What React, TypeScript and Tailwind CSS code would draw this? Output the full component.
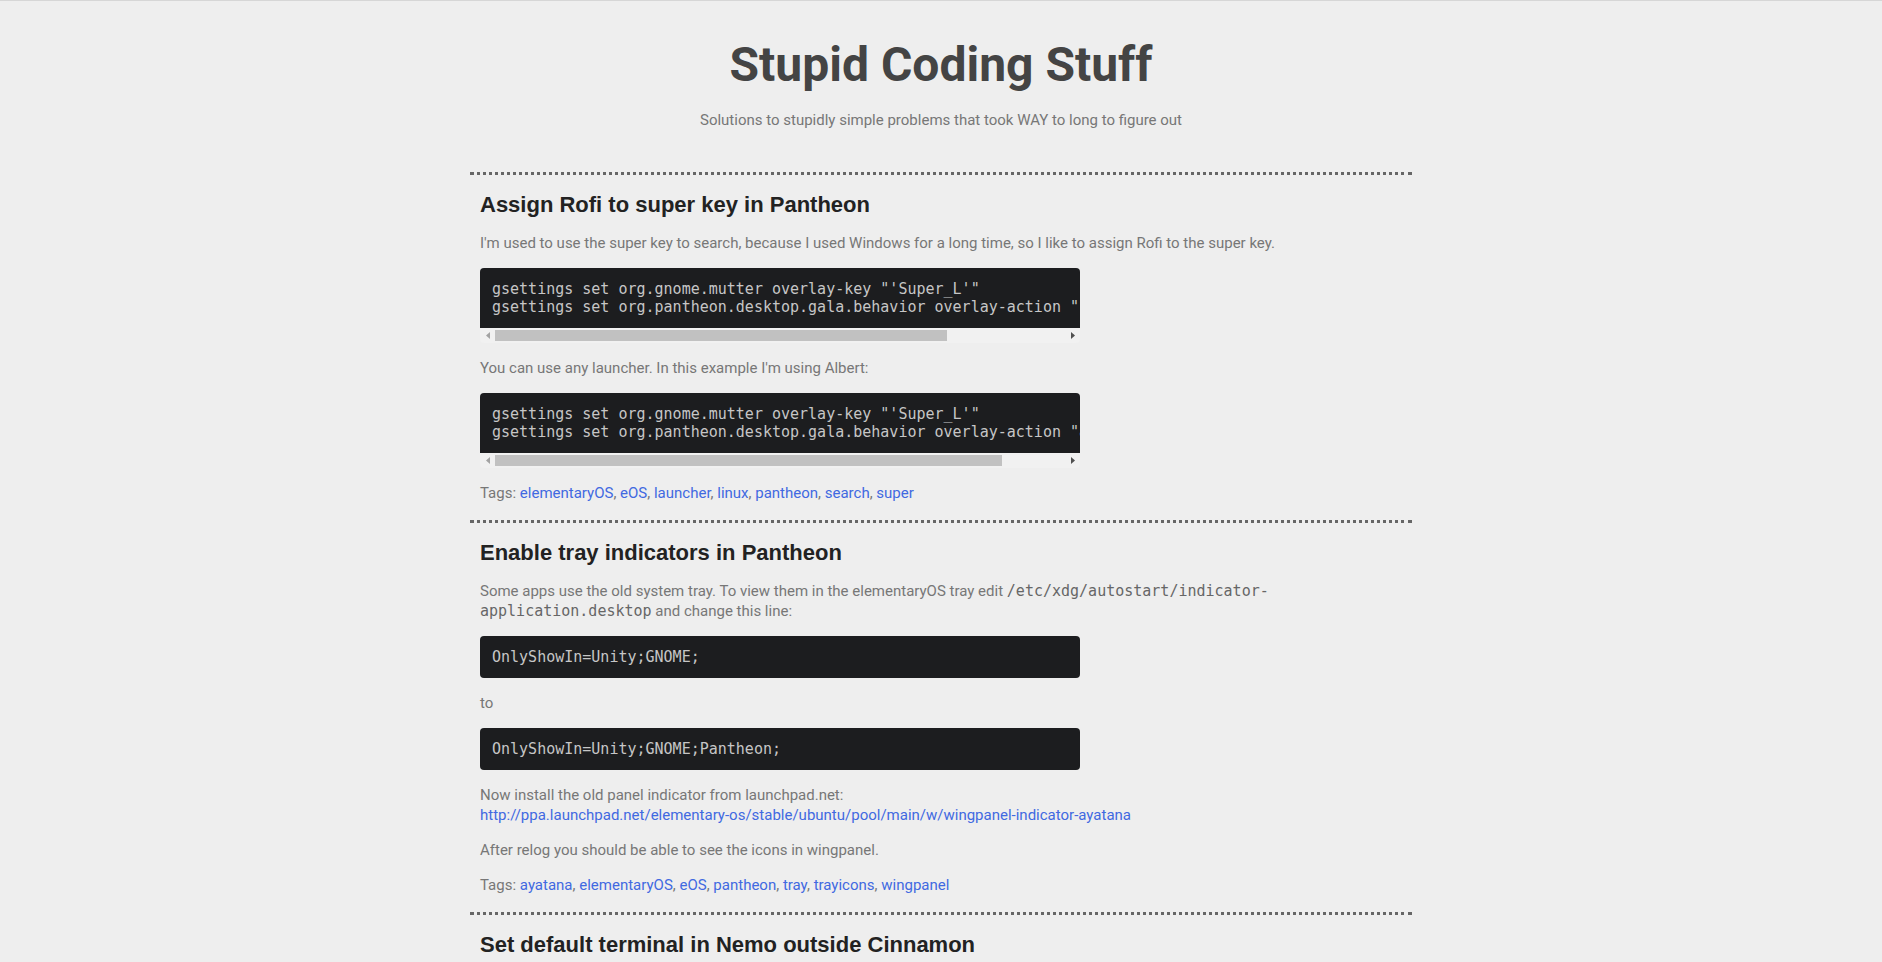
import React from 'react';

type Block =
  | { kind: 'p'; content: React.ReactNode }
  | { kind: 'code'; text: string; thumb?: string };

type Post = {
  title: string;
  blocks: Block[];
  tags: string[];
};

const mono = "font-['DejaVu_Sans_Mono','Liberation_Mono',monospace]";

const posts: Post[] = [
  {
    title: 'Assign Rofi to super key in Pantheon',
    blocks: [
      {
        kind: 'p',
        content:
          "I'm used to use the super key to search, because I used Windows for a long time, so I like to assign Rofi to the super key.",
      },
      {
        kind: 'code',
        text: `gsettings set org.gnome.mutter overlay-key "'Super_L'"\ngsettings set org.pantheon.desktop.gala.behavior overlay-action "rofi -show drun"`,
        thumb: 'w-[452px]',
      },
      { kind: 'p', content: "You can use any launcher. In this example I'm using Albert:" },
      {
        kind: 'code',
        text: `gsettings set org.gnome.mutter overlay-key "'Super_L'"\ngsettings set org.pantheon.desktop.gala.behavior overlay-action "albert show"`,
        thumb: 'w-[507px]',
      },
    ],
    tags: ['elementaryOS', 'eOS', 'launcher', 'linux', 'pantheon', 'search', 'super'],
  },
  {
    title: 'Enable tray indicators in Pantheon',
    blocks: [
      {
        kind: 'p',
        content: (
          <>
            Some apps use the old system tray. To view them in the elementaryOS tray edit{' '}
            <code className={`${mono} text-[#666]`}>/etc/xdg/autostart/indicator-application.desktop</code> and change
            this line:
          </>
        ),
      },
      { kind: 'code', text: 'OnlyShowIn=Unity;GNOME;' },
      { kind: 'p', content: 'to' },
      { kind: 'code', text: 'OnlyShowIn=Unity;GNOME;Pantheon;' },
      {
        kind: 'p',
        content: (
          <>
            Now install the old panel indicator from launchpad.net:
            <br />
            <a href="#" className="text-[#4169e1]">
              http://ppa.launchpad.net/elementary-os/stable/ubuntu/pool/main/w/wingpanel-indicator-ayatana
            </a>
          </>
        ),
      },
      { kind: 'p', content: 'After relog you should be able to see the icons in wingpanel.' },
    ],
    tags: ['ayatana', 'elementaryOS', 'eOS', 'pantheon', 'tray', 'trayicons', 'wingpanel'],
  },
  {
    title: 'Set default terminal in Nemo outside Cinnamon',
    blocks: [
      {
        kind: 'p',
        content:
          'Nemo reads the terminal from the Cinnamon settings, even when you run it in another desktop. Set it with:',
      },
      {
        kind: 'code',
        text: 'gsettings set org.cinnamon.desktop.default-applications.terminal exec io.elementary.terminal',
      },
    ],
    tags: ['cinnamon', 'linux', 'nemo', 'terminal'],
  },
];

// the classic horizontal scrollbar under a long code block
function HScroll({ thumb }: { thumb: string }) {
  return (
    <div className="flex h-[15px] items-center bg-[#f1f1f1]">
      <div className="flex h-[15px] w-[15px] items-center justify-center">
        <svg width="4" height="7" viewBox="0 0 4 7">
          <path d="M4 0 L0 3.5 L4 7 Z" fill="#a3a3a3" />
        </svg>
      </div>
      <div className="h-[15px] flex-1 py-[2px]">
        <div className={`h-full bg-[#c1c1c1] ${thumb}`} />
      </div>
      <div className="flex h-[15px] w-[15px] items-center justify-center">
        <svg width="4" height="7" viewBox="0 0 4 7">
          <path d="M0 0 L4 3.5 L0 7 Z" fill="#505050" />
        </svg>
      </div>
    </div>
  );
}

function Code({ text, thumb }: { text: string; thumb?: string }) {
  return (
    <div className="w-[600px] overflow-hidden rounded-[4px]">
      <pre
        className={`${mono} overflow-hidden bg-[#1c1d1f] p-3 text-[15px] leading-[18px] whitespace-pre text-[#c6c6c6]`}
      >
        {text}
      </pre>
      {thumb && <HScroll thumb={thumb} />}
    </div>
  );
}

function Article({ post }: { post: Post }) {
  return (
    <article className="border-t-[3px] border-dotted border-[#666] px-[10px] pt-[18px] pb-[17px]">
      <h2 className="font-['Liberation_Sans',Arial,sans-serif] text-[22px] leading-[24px] font-bold text-[#222]">
        {post.title}
      </h2>
      <div className="mt-[16px] flex flex-col gap-[15px]">
        {post.blocks.map((b, i) =>
          b.kind === 'p' ? (
            <p key={i} className="max-w-[800px]">
              {b.content}
            </p>
          ) : (
            <Code key={i} text={b.text} thumb={b.thumb} />
          )
        )}
        <p>
          Tags:{' '}
          {post.tags.map((t, i) => (
            <React.Fragment key={t}>
              <a href="#" className="text-[#4169e1]">
                {t}
              </a>
              {i < post.tags.length - 1 ? ', ' : ''}
            </React.Fragment>
          ))}
        </p>
      </div>
    </article>
  );
}

export default function App() {
  return (
    <div className="min-h-screen border-t border-[#d6d6d6] bg-[#eeeeee] font-['Roboto','Liberation_Sans',sans-serif] text-[15px] leading-[20px] text-[#777]">
      <header className="pt-[36px] text-center">
        <h1 className="text-[48px] leading-[56px] font-bold text-[#444]">Stupid Coding Stuff</h1>
        <p className="mt-[18px] text-[15px] leading-[18px] text-[#777]">
          Solutions to stupidly simple problems that took WAY to long to figure out
        </p>
      </header>
      <main className="mx-auto mt-[43px] w-[942px]">
        {posts.map((p) => (
          <Article key={p.title} post={p} />
        ))}
      </main>
    </div>
  );
}
